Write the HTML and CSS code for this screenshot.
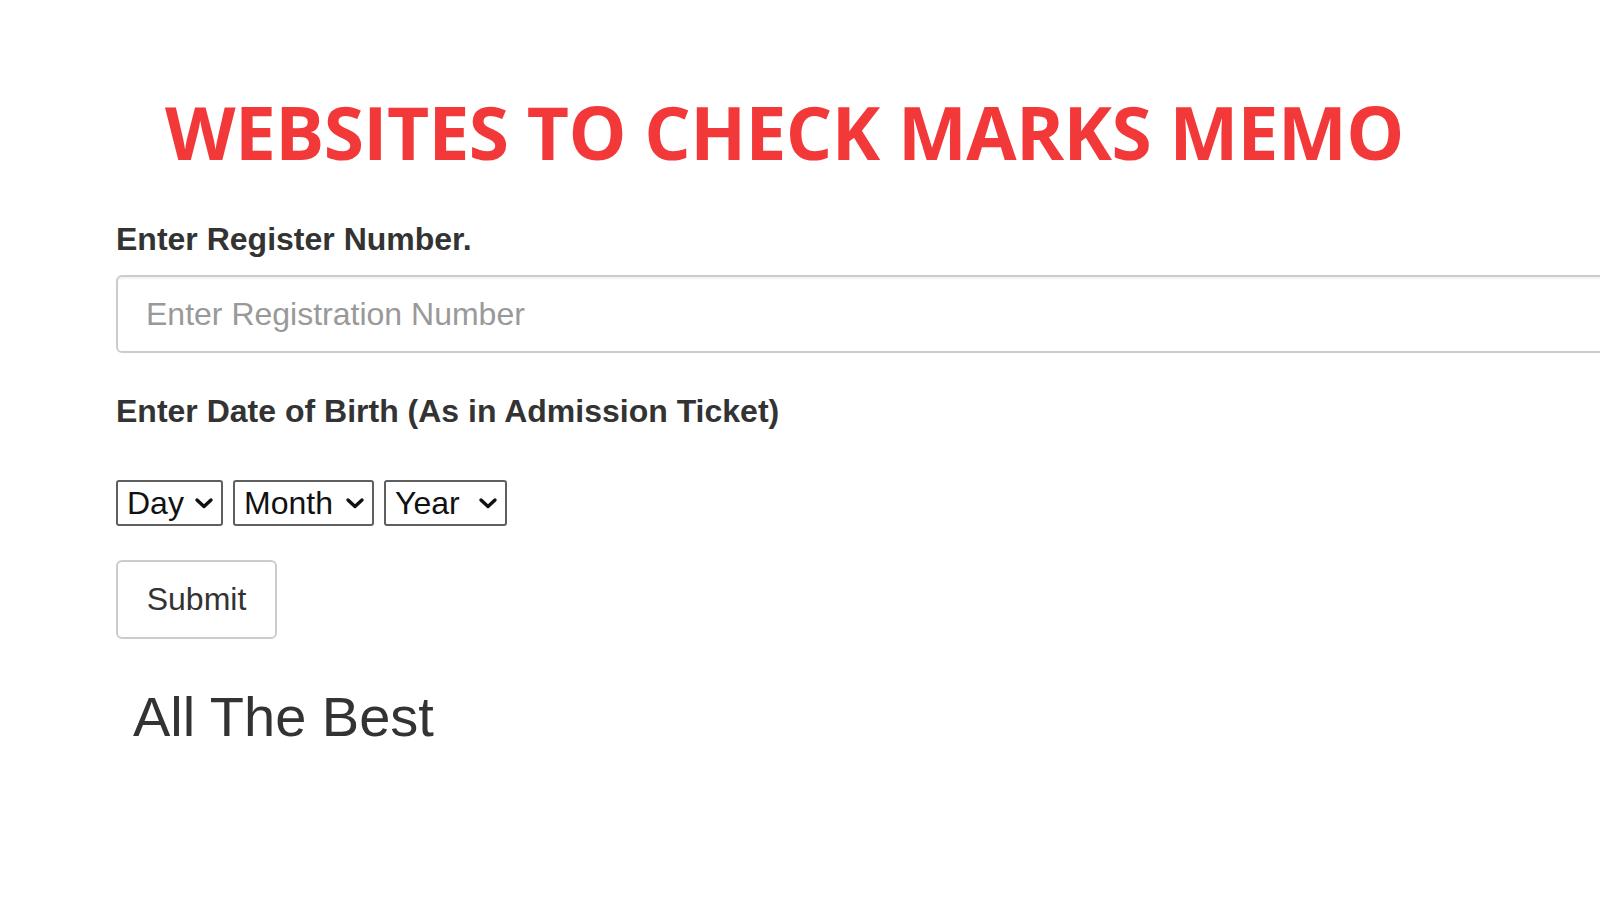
FILE: index.html
```html
<!DOCTYPE html>
<html>
<head>
<meta charset="utf-8">
<link rel="stylesheet" href="styles.css">
</head>
<body>
<div class="page">
  <h1 class="title">WEBSITES TO CHECK MARKS MEMO</h1>
  <form class="form">
    <label class="label" for="reg">Enter Register Number.</label>
    <input id="reg" class="text-input" type="text" placeholder="Enter Registration Number">
    <label class="label label-dob">Enter Date of Birth (As in Admission Ticket)</label>
    <div class="dob-row">
      <div class="sel sel-day">
        <select><option>Day</option></select>
        <svg class="chev" viewBox="0 0 20 12" width="20" height="12"><path d="M3 3 L10 9.5 L17 3" fill="none" stroke="#111" stroke-width="3.4" stroke-linecap="round" stroke-linejoin="round"/></svg>
      </div>
      <div class="sel sel-month">
        <select><option>Month</option></select>
        <svg class="chev" viewBox="0 0 20 12" width="20" height="12"><path d="M3 3 L10 9.5 L17 3" fill="none" stroke="#111" stroke-width="3.4" stroke-linecap="round" stroke-linejoin="round"/></svg>
      </div>
      <div class="sel sel-year">
        <select><option>Year</option></select>
        <svg class="chev" viewBox="0 0 20 12" width="20" height="12"><path d="M3 3 L10 9.5 L17 3" fill="none" stroke="#111" stroke-width="3.4" stroke-linecap="round" stroke-linejoin="round"/></svg>
      </div>
    </div>
    <button type="button" class="btn">Submit</button>
  </form>
  <p class="best">All The Best</p>
</div>
</body>
</html>
```
FILE: styles.css
```css
html, body {
  margin: 0;
  padding: 0;
  background: #ffffff;
  overflow: hidden;
}
.page {
  width: 1600px;
  height: 900px;
  font-family: "Liberation Sans", Arial, sans-serif;
  color: #333333;
}
.title {
  margin: 0;
  padding: 92px 0 0 165px;
  font-family: "Open Sans", sans-serif;
  font-weight: 700;
  font-size: 73px;
  line-height: 80px;
  color: #f23838;
  letter-spacing: -0.6px;
  white-space: nowrap;
}
.form {
  display: flex;
  flex-direction: column;
  align-items: flex-start;
  padding-left: 116px;
  margin-top: 49px;
}
.label {
  font-weight: bold;
  font-size: 32px;
  line-height: 36px;
  color: #333333;
}
.text-input {
  box-sizing: border-box;
  margin-top: 18px;
  width: 1520px;
  height: 78px;
  border: 2px solid #cccccc;
  border-radius: 6px;
  padding: 0 28px;
  font-family: "Liberation Sans", Arial, sans-serif;
  font-size: 32px;
  color: #555;
  outline: none;
  box-shadow: inset 0 2px 2px rgba(0,0,0,0.05);
}
.text-input::placeholder {
  color: #999999;
}
.label-dob {
  margin-top: 40px;
}
.dob-row {
  display: flex;
  gap: 10px;
  margin-top: 51px;
}
.sel {
  position: relative;
}
.sel select {
  box-sizing: border-box;
  appearance: none;
  -webkit-appearance: none;
  height: 46px;
  border: 2px solid #5f5f5f;
  border-radius: 3px;
  background: #fff;
  font-family: "Liberation Sans", Arial, sans-serif;
  font-size: 32px;
  color: #111;
  padding: 0 0 0 9px;
  outline: none;
}
.sel-day select { width: 107px; }
.sel-month select { width: 141px; }
.sel-year select { width: 123px; }
.chev {
  position: absolute;
  right: 9px;
  top: 17px;
  pointer-events: none;
}
.btn {
  box-sizing: border-box;
  margin-top: 34px;
  width: 161px;
  height: 79px;
  border: 2px solid #cccccc;
  border-radius: 6px;
  background: #ffffff;
  font-family: "Liberation Sans", Arial, sans-serif;
  font-size: 32px;
  color: #333333;
}
.best {
  margin: 46px 0 0 133px;
  font-size: 56px;
  line-height: 64px;
  color: #333333;
}
```
